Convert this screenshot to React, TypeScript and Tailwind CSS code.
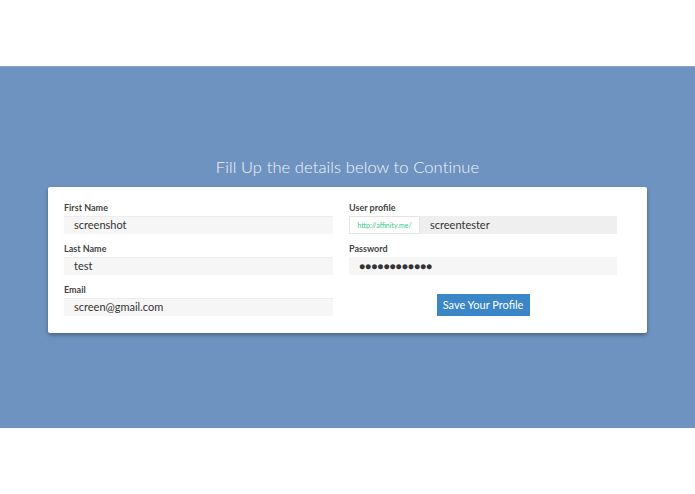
export default function App() {
  return (
    <div className="flex h-[494px] w-[695px] flex-col bg-white font-['Lato',sans-serif]">
      <div className="h-[66px] shrink-0 bg-white" />
      <div className="flex h-[362px] shrink-0 flex-col items-center border-t border-[#8aa3c2] bg-[#6f93c0]">
        <h1 className="mt-[88px] text-[16.5px] font-light leading-[24px] tracking-[0.1px] text-[#f2f5fa]">
          Fill Up the details below to Continue
        </h1>
        <div className="mt-[8px] flex h-[146px] w-[599px] gap-4 rounded-[2px] bg-white pl-4 pr-[30px] pt-[14px] shadow-[0_2px_4px_rgba(0,0,0,0.35)]">
          <div className="flex w-[269px] flex-col">
            <Field label="First Name" value="screenshot" />
            <Field label="Last Name" value="test" />
            <Field label="Email" value="screen@gmail.com" />
          </div>
          <div className="flex w-[268px] flex-col">
            <label className="h-[15px] text-[9px] font-bold leading-[14px] text-[#444]">User profile</label>
            <div className="mb-[8px] flex h-[18px]">
              <span className="flex w-[71px] items-center justify-center border border-[#e4e4e4] bg-white text-[7px] text-[#3cc48c]">
                http://affinity.me/
              </span>
              <span className="flex flex-1 items-center bg-[#efefef] pl-[10px] text-[11px] text-[#333]">screentester</span>
            </div>
            <label className="h-[15px] text-[9px] font-bold leading-[14px] text-[#444]">Password</label>
            <div className="mb-[19px] flex h-[18px] items-center bg-[#f6f6f6] pl-[10px] text-[10px] tracking-[0.1px] text-[#333]">
              ●●●●●●●●●●●●
            </div>
            <div className="flex justify-center">
              <button className="h-[22px] w-[93px] bg-[#3b86c7] text-[11px] text-white">Save Your Profile</button>
            </div>
          </div>
        </div>
      </div>
      <div className="flex-1 bg-white" />
    </div>
  );
}

function Field({ label, value }: { label: string; value: string }) {
  return (
    <div className="mb-[8px] flex flex-col">
      <label className="h-[15px] text-[9px] font-bold leading-[14px] text-[#444]">{label}</label>
      <div className="flex h-[18px] items-center border-t border-[#ededed] bg-[#f6f6f6] pl-[10px] text-[11px] text-[#333]">
        {value}
      </div>
    </div>
  );
}
